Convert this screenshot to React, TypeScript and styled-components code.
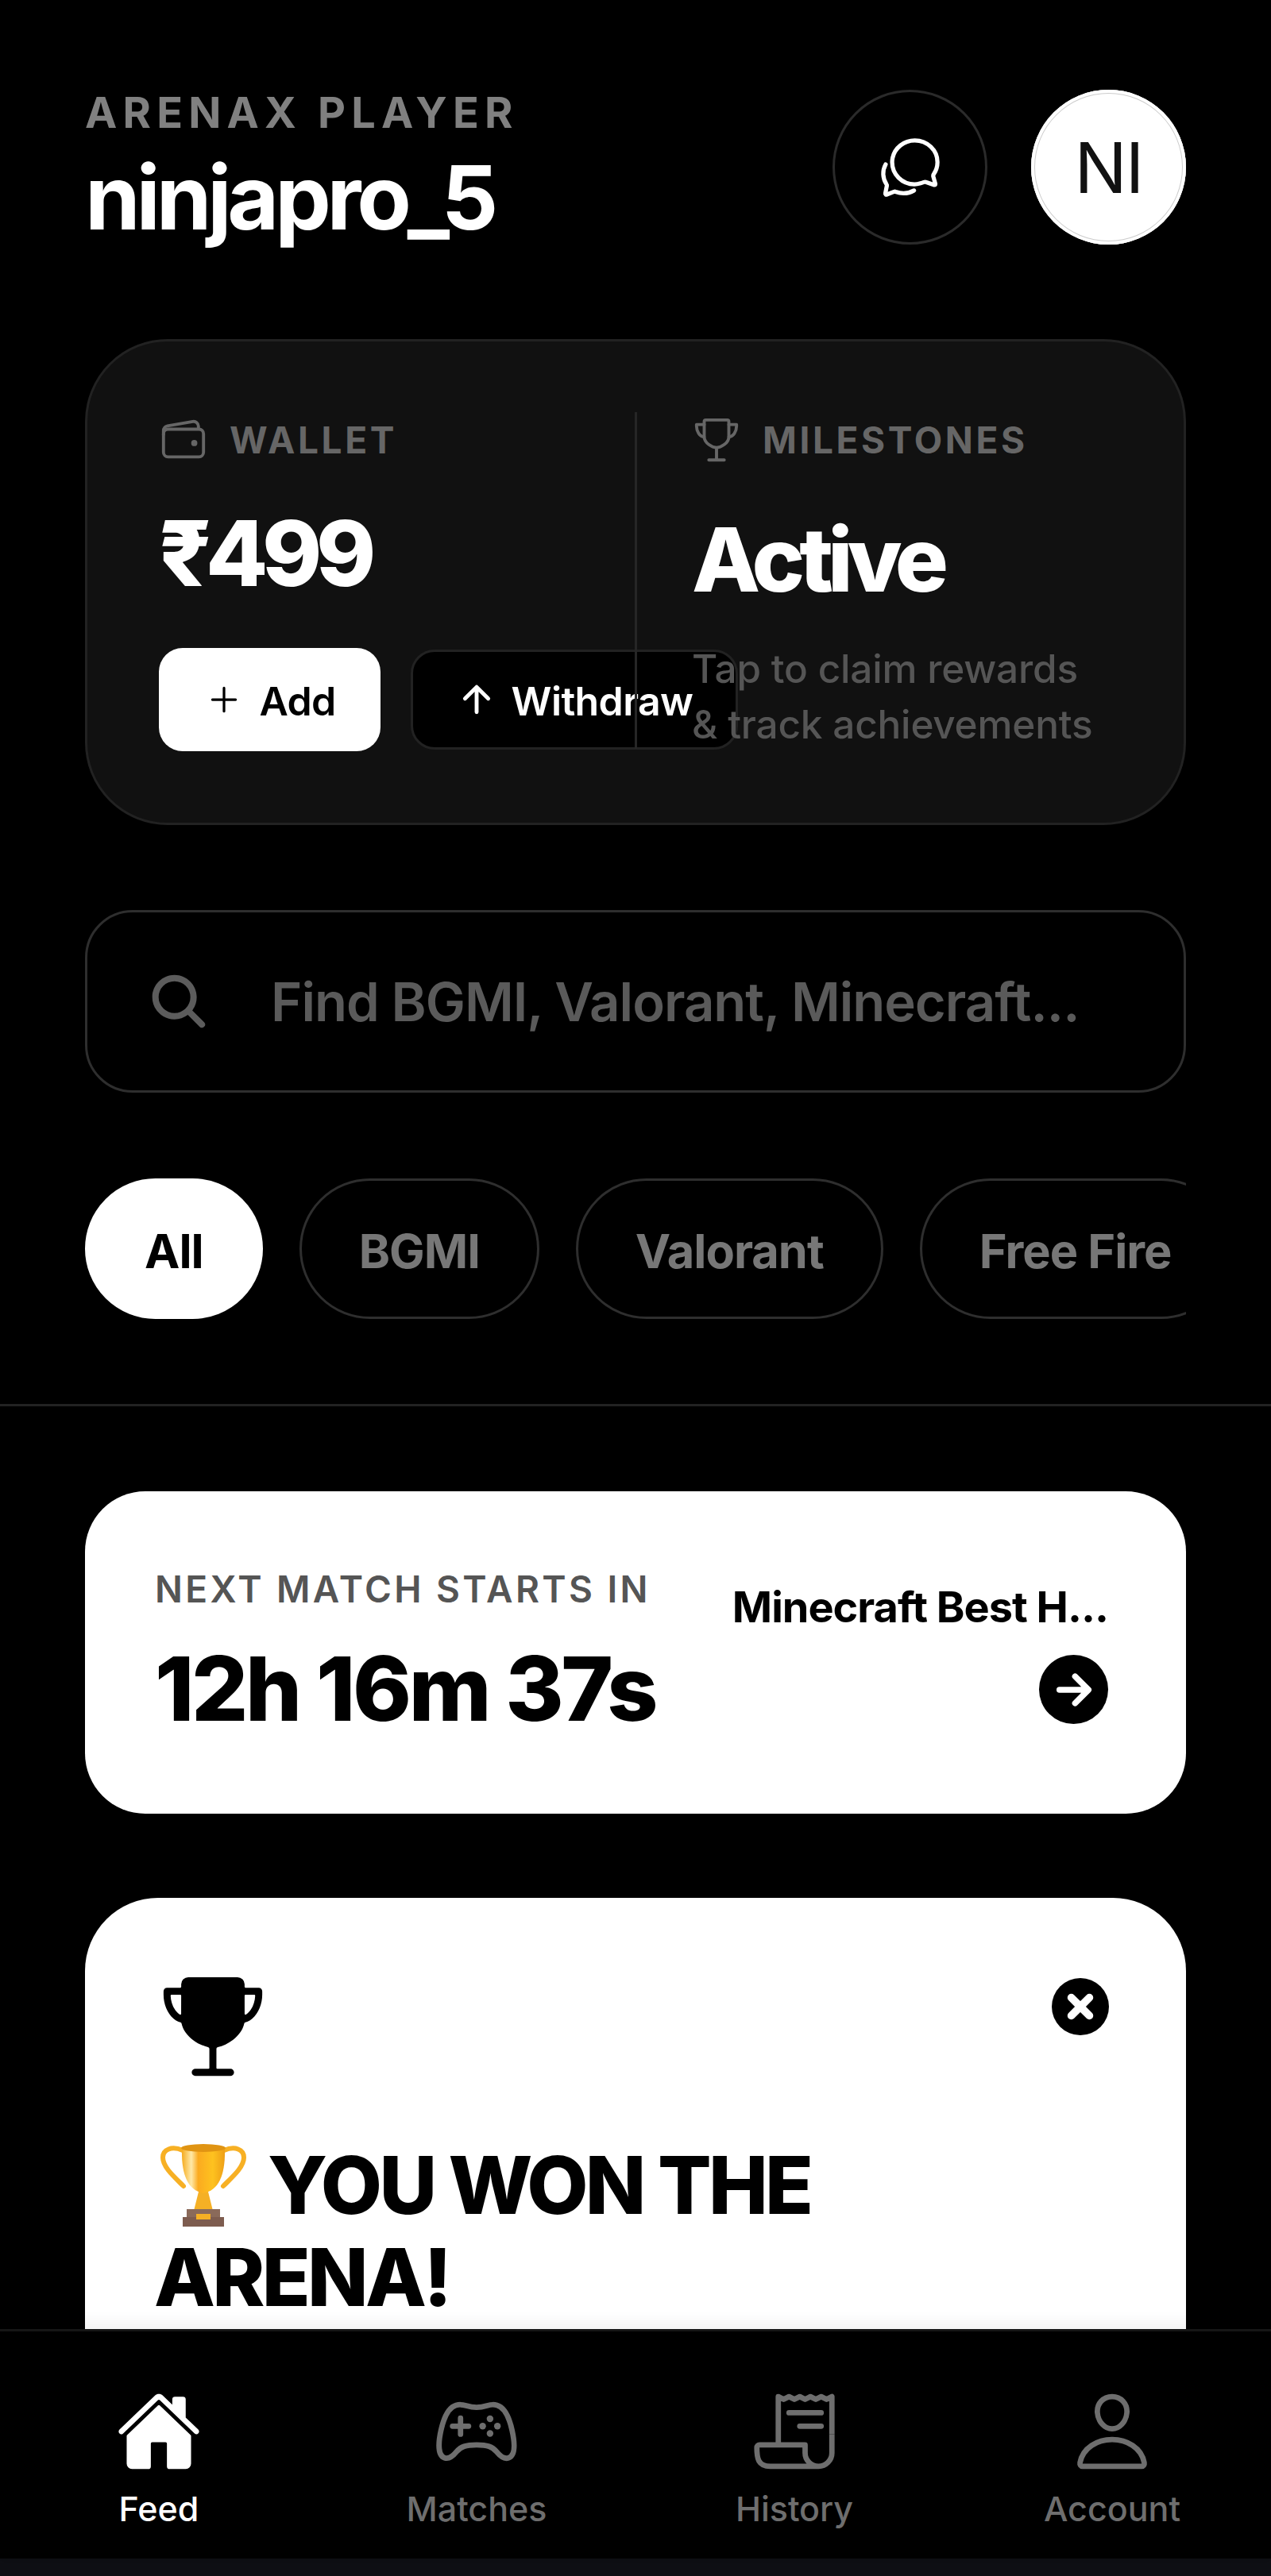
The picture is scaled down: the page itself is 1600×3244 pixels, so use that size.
import React from 'react';
import styled, { createGlobalStyle } from 'styled-components';
import {
  IoAdd,
  IoArrowForward,
  IoArrowUp,
  IoChatbubblesOutline,
  IoClose,
  IoGameControllerOutline,
  IoHome,
  IoPersonOutline,
  IoReceiptOutline,
  IoSearch,
  IoTrophy,
  IoTrophyOutline,
  IoWalletOutline,
} from 'react-icons/io5';

const GlobalStyle = createGlobalStyle`
  html, body {
    margin: 0;
    padding: 0;
    background: #000;
  }
  * {
    box-sizing: border-box;
  }
`;

const Screen = styled.div`
  width: 1600px;
  height: 3244px;
  display: flex;
  flex-direction: column;
  overflow: hidden;
  background: #000;
  font-family: Inter, 'Noto Sans', sans-serif;
  color: #fff;
`;

const Feed = styled.main`
  flex: 1;
  min-height: 0;
  overflow: hidden;
  padding-top: 113px;
`;

const Gutter = styled.div`
  padding: 0 107px;
`;

const Header = styled.header`
  display: flex;
  align-items: flex-start;
  justify-content: space-between;
`;

const Kicker = styled.div`
  margin-top: 4px;
  font-size: 54px;
  line-height: 50px;
  font-weight: 700;
  letter-spacing: 7.2px;
  color: #808080;
`;

const Username = styled.h1`
  margin: 22px 0 0;
  font-size: 112px;
  line-height: 118px;
  font-weight: 700;
  letter-spacing: -5.2px;
`;

const HeaderActions = styled.div`
  display: flex;
  gap: 55px;
`;

const ChatButton = styled.button`
  width: 195px;
  height: 195px;
  display: flex;
  align-items: center;
  justify-content: center;
  padding: 0;
  border: 3px solid #2a2a2a;
  border-radius: 50%;
  background: #000;
  color: #fff;
  font-size: 84px;
`;

const Avatar = styled.div`
  width: 195px;
  height: 195px;
  display: flex;
  align-items: center;
  justify-content: center;
  border-radius: 50%;
  background: #fff;
  box-shadow: inset 0 0 0 4px #fff, inset 0 0 0 5px #ccc;
  color: #111;
  font-size: 88px;
  font-weight: 400;
  letter-spacing: -2px;
`;

const WalletCard = styled.section`
  height: 612px;
  margin-top: 119px;
  padding: 93px 90px 89px 90px;
  display: flex;
  background: #111;
  border: 3px solid #222;
  border-radius: 104px;
`;

const WalletCol = styled.div`
  width: 599px;
  flex: none;
  display: flex;
  flex-direction: column;
`;

const MilestoneCol = styled.div`
  flex: 1;
  min-width: 0;
  margin: -4px 0 4px;
  padding: 4px 0 0 69px;
  border-left: 3px solid #262626;
`;

const StatLabel = styled.div`
  height: 62px;
  display: flex;
  align-items: center;
  gap: 27px;
  font-size: 46px;
  font-weight: 700;
  letter-spacing: 3.6px;
  color: #666;
  svg {
    font-size: 62px;
    flex: none;
  }
`;

const Balance = styled.div`
  margin-top: 55px;
  font-size: 114px;
  line-height: 114px;
  font-weight: 800;
  letter-spacing: -7.5px;
`;

const WalletActions = styled.div`
  margin-top: 62px;
  display: flex;
  align-items: center;
  gap: 38px;
`;

const ActionButton = styled.button<{ $primary?: boolean }>`
  flex: none;
  display: flex;
  align-items: center;
  justify-content: center;
  gap: 18px;
  height: ${(p) => (p.$primary ? '130px' : '126px')};
  width: ${(p) => (p.$primary ? '279px' : '412px')};
  padding: 4px 0 0;
  border: ${(p) => (p.$primary ? 'none' : '3px solid #222')};
  border-radius: 30px;
  background: ${(p) => (p.$primary ? '#fff' : '#000')};
  color: ${(p) => (p.$primary ? '#000' : '#fff')};
  font-family: inherit;
  font-size: 50px;
  font-weight: 600;
  letter-spacing: -0.6px;
  svg {
    font-size: 52px;
    flex: none;
    margin-top: -4px;
  }
`;

const MilestoneState = styled.div`
  margin-top: 62px;
  font-size: 112px;
  line-height: 114px;
  font-weight: 800;
  letter-spacing: -7px;
`;

const MilestoneHint = styled.p`
  margin: 46px 0 0;
  font-size: 49.5px;
  line-height: 70px;
  font-weight: 500;
  letter-spacing: -0.2px;
  color: #555;
  white-space: nowrap;
`;

const SearchBox = styled.div`
  height: 230px;
  margin-top: 107px;
  padding: 0 74px;
  display: flex;
  align-items: center;
  gap: 75px;
  border: 3px solid #2e2e2e;
  border-radius: 60px;
  color: #5c5c5c;
  svg {
    font-size: 82px;
    flex: none;
  }
`;

const SearchHint = styled.span`
  font-size: 67px;
  font-weight: 600;
  letter-spacing: -1px;
  color: #5a5a5a;
  white-space: nowrap;
`;

const ChipRow = styled.div`
  margin-top: 108px;
  display: flex;
  gap: 46px;
  overflow: hidden;
`;

const Chip = styled.button<{ $active?: boolean }>`
  flex: none;
  height: 177px;
  padding: 4px 72px 0;
  border: ${(p) => (p.$active ? '3px solid #fff' : '3px solid #2e2e2e')};
  border-radius: 90px;
  background: ${(p) => (p.$active ? '#fff' : '#000')};
  color: ${(p) => (p.$active ? '#000' : '#777')};
  font-family: inherit;
  font-size: 59.5px;
  font-weight: 700;
  letter-spacing: -1px;
`;

const Rule = styled.hr`
  height: 3px;
  margin: 107px 0 0;
  border: none;
  background: #222;
`;

const MatchCard = styled.section`
  height: 406px;
  margin-top: 107px;
  padding: 100px 98px 0 88px;
  display: flex;
  justify-content: space-between;
  background: #fff;
  border-radius: 76px;
  color: #000;
`;

const MatchLabel = styled.div`
  font-size: 46px;
  line-height: 46px;
  font-weight: 600;
  letter-spacing: 3.4px;
  color: #555;
`;

const Countdown = styled.div`
  margin-top: 38px;
  font-size: 112px;
  line-height: 128px;
  font-weight: 800;
  letter-spacing: -3.4px;
`;

const MatchSide = styled.div`
  display: flex;
  flex-direction: column;
  align-items: flex-end;
  padding-top: 14px;
`;

const MatchName = styled.div`
  font-size: 54px;
  line-height: 64px;
  font-weight: 700;
  letter-spacing: -1px;
`;

const GoButton = styled.button`
  width: 87px;
  height: 87px;
  margin-top: 28px;
  display: flex;
  align-items: center;
  justify-content: center;
  padding: 0;
  border: none;
  border-radius: 50%;
  background: #000;
  color: #fff;
  font-size: 60px;
  svg * {
    stroke-width: 64;
  }
`;

const WinCard = styled.section`
  height: 640px;
  margin-top: 106px;
  padding: 101px 97px 0 87px;
  background: #fff;
  border-radius: 92px;
  color: #000;
`;

const WinTop = styled.div`
  display: flex;
  align-items: flex-start;
  justify-content: space-between;
`;

const WinIcon = styled.div`
  margin-left: 3px;
  font-size: 142px;
  line-height: 0;
  margin-top: -10px;
`;

const CloseButton = styled.button`
  width: 72px;
  height: 72px;
  display: flex;
  align-items: center;
  justify-content: center;
  padding: 0;
  border: none;
  border-radius: 50%;
  background: #000;
  color: #fff;
  font-size: 52px;
  svg * {
    stroke-width: 48;
  }
`;

const WinTitle = styled.h2`
  margin: 71px 0 0;
  font-size: 100px;
  line-height: 116px;
  font-weight: 800;
  letter-spacing: -3.7px;
`;

const TitleEmoji = styled.svg`
  width: 108px;
  height: 106px;
  margin: 0 27px -16px 8px;
`;

const BottomNav = styled.nav`
  position: relative;
  height: 289px;
  flex: none;
  display: flex;
  background: #000;
  border-top: 3px solid #161616;
  box-shadow: 0 -8px 18px rgba(0, 0, 0, 0.06);
`;

const NavItem = styled.div<{ $active?: boolean }>`
  flex: 1;
  padding-top: 72px;
  display: flex;
  flex-direction: column;
  align-items: center;
  color: ${(p) => (p.$active ? '#fff' : '#6e6e6e')};
  svg {
    font-size: 108px;
    height: 108px;
  }
`;

const NavLabel = styled.span`
  margin-top: 17px;
  font-size: 43px;
  line-height: 52px;
  font-weight: 500;
`;

const SystemStrip = styled.div`
  height: 22px;
  flex: none;
  background: #0e0f14;
`;

const TrophyEmoji = () => (
  <TitleEmoji viewBox="0 0 108 106" aria-hidden="true">
    <defs>
      <linearGradient id="cup" x1="0" x2="1" y1="0" y2="0">
        <stop offset="0" stopColor="#f5ab1e" />
        <stop offset="0.22" stopColor="#ffe9a8" />
        <stop offset="0.38" stopColor="#fbab20" />
        <stop offset="0.72" stopColor="#fec21f" />
        <stop offset="1" stopColor="#ee9f17" />
      </linearGradient>
    </defs>
    <path d="M28 10C14 4 3 9 3 19c0 12 14 24 26 36" fill="none" stroke="#f7b024" strokeWidth="6" strokeLinecap="round" />
    <path d="M80 10c14-6 25-1 25 9 0 12-14 24-26 36" fill="none" stroke="#f7b024" strokeWidth="6" strokeLinecap="round" />
    <path d="M48 62h12l6 24H42z" fill="#f5b025" />
    <path d="M27 6h54c1 32-6 54-27 58C33 60 26 38 27 6z" fill="url(#cup)" />
    <ellipse cx="54" cy="7" rx="28" ry="5" fill="#e09413" />
    <path d="M33 84h42v12H33z" fill="#8a6a5a" />
    <path d="M28 94h52v12H28z" fill="#7d5c4f" />
    <path d="M45 90h18v7H45z" fill="#f5b025" />
  </TitleEmoji>
);

const navItems = [
  { label: 'Feed', Icon: IoHome, active: true },
  { label: 'Matches', Icon: IoGameControllerOutline },
  { label: 'History', Icon: IoReceiptOutline },
  { label: 'Account', Icon: IoPersonOutline },
];

export default function App() {
  return (
    <Screen>
      <GlobalStyle />
      <Feed>
        <Gutter>
          <Header>
            <div>
              <Kicker>ARENAX PLAYER</Kicker>
              <Username>ninjapro_5</Username>
            </div>
            <HeaderActions>
              <ChatButton aria-label="Messages">
                <IoChatbubblesOutline />
              </ChatButton>
              <Avatar>NI</Avatar>
            </HeaderActions>
          </Header>

          <WalletCard>
            <WalletCol>
              <StatLabel>
                <IoWalletOutline />
                WALLET
              </StatLabel>
              <Balance>₹499</Balance>
              <WalletActions>
                <ActionButton $primary>
                  <IoAdd />
                  Add
                </ActionButton>
                <ActionButton>
                  <IoArrowUp />
                  Withdraw
                </ActionButton>
              </WalletActions>
            </WalletCol>
            <MilestoneCol>
              <StatLabel>
                <IoTrophyOutline />
                MILESTONES
              </StatLabel>
              <MilestoneState>Active</MilestoneState>
              <MilestoneHint>
                Tap to claim rewards
                <br />& track achievements
              </MilestoneHint>
            </MilestoneCol>
          </WalletCard>

          <SearchBox>
            <IoSearch />
            <SearchHint>Find BGMI, Valorant, Minecraft...</SearchHint>
          </SearchBox>

          <ChipRow>
            <Chip $active>All</Chip>
            <Chip>BGMI</Chip>
            <Chip>Valorant</Chip>
            <Chip>Free Fire</Chip>
          </ChipRow>
        </Gutter>

        <Rule />

        <Gutter>
          <MatchCard>
            <div>
              <MatchLabel>NEXT MATCH STARTS IN</MatchLabel>
              <Countdown>12h 16m 37s</Countdown>
            </div>
            <MatchSide>
              <MatchName>Minecraft Best H...</MatchName>
              <GoButton aria-label="Open match">
                <IoArrowForward />
              </GoButton>
            </MatchSide>
          </MatchCard>

          <WinCard>
            <WinTop>
              <WinIcon>
                <IoTrophy />
              </WinIcon>
              <CloseButton aria-label="Dismiss">
                <IoClose />
              </CloseButton>
            </WinTop>
            <WinTitle>
              <TrophyEmoji />
              YOU WON THE
              <br />
              ARENA!
            </WinTitle>
          </WinCard>
        </Gutter>
      </Feed>

      <BottomNav>
        {navItems.map(({ label, Icon, active }) => (
          <NavItem key={label} $active={active}>
            <Icon />
            <NavLabel>{label}</NavLabel>
          </NavItem>
        ))}
      </BottomNav>
      <SystemStrip />
    </Screen>
  );
}
